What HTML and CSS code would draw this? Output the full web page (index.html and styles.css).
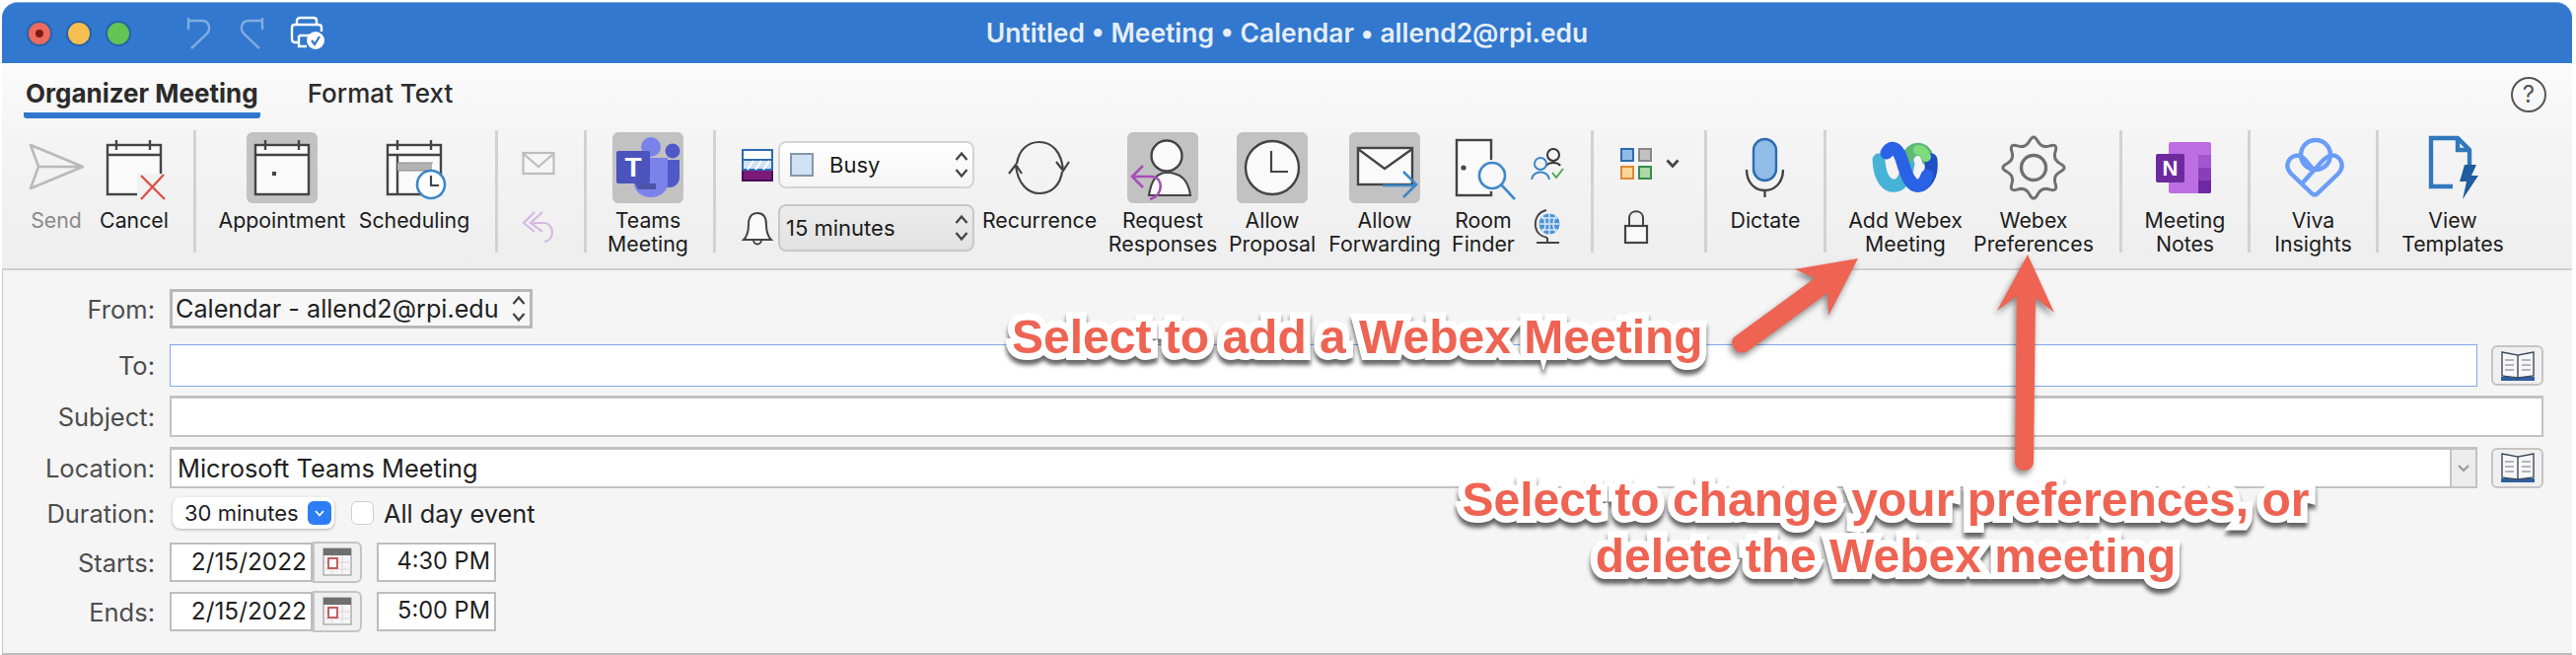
FILE: index.html
```html
<!DOCTYPE html>
<html lang="en">
<head>
<meta charset="utf-8">
<title>Untitled • Meeting • Calendar</title>
<link rel="stylesheet" href="styles.css">
</head>
<body>
<div class="window">
  <header class="titlebar">
    <div class="tb-left">
      <span class="light red"><i></i></span><span class="light yellow"></span><span class="light green"></span>
      <svg class="tb-undo" width="30" height="34" viewBox="0 0 30 34"><path d="M6 32 L22 17 C26 12 24 4 17 4 L3 4 M3 1 V13" fill="none" stroke="#82abe0" stroke-width="2.4"/></svg>
      <svg class="tb-redo" width="30" height="34" viewBox="0 0 30 34"><path d="M24 32 L8 17 C4 12 6 4 13 4 L27 4 M27 1 V13" fill="none" stroke="#82abe0" stroke-width="2.4"/></svg>
      <svg class="tb-print" width="36" height="36" viewBox="0 0 36 36"><path d="M7 9 V5 C7 3 9 2 10 2 H24 C26 2 27 3 27 5 V9 M10 27 H5 C3 27 2 25 2 23 V12 C2 10 3 9 5 9 H29 C31 9 32 10 32 12 V16 M9 20 H22 M9 20 V31 H17" fill="none" stroke="#fff" stroke-width="2.4"/><circle cx="26" cy="25" r="9" fill="#fff"/><path d="M22 25 L25 29 L30 21" fill="none" stroke="#3178ce" stroke-width="2.2"/></svg>
    </div>
    <div class="tb-title">Untitled • Meeting • Calendar • allend2@rpi.edu</div>
    <div class="tb-right"></div>
  </header>

  <nav class="tabs">
    <span class="tab active">Organizer Meeting</span>
    <span class="tab">Format Text</span>
    <span class="help">?</span>
  </nav>

  <section class="ribbon">
    <div class="item w-send disabled">
      <svg class="ico" viewBox="0 0 72 72"><path d="M10 13 L63 35 L10 57 L18 35 Z M18 35 H63" fill="none" stroke="#b9b9b9" stroke-width="2.6" stroke-linejoin="round"/></svg>
      <span class="lbl">Send</span>
    </div>
    <div class="item w-cancel">
      <svg class="ico" viewBox="0 0 72 72"><rect x="9" y="13" width="54" height="50" fill="#fafafa" stroke="#444" stroke-width="2.4"/><path d="M9 23 H63 M18 8 V18 M52 8 V18" stroke="#444" stroke-width="2.4"/><path d="M39 42 H70 V70 H39Z" fill="#f2f2f2"/><path d="M43 44 L67 68 M66 43 L43 68" stroke="#d9534a" stroke-width="2.4"/></svg>
      <span class="lbl">Cancel</span>
    </div>
    <div class="sep m-a"></div>

    <div class="item w-appt">
      <svg class="ico on" viewBox="0 0 72 72"><rect x="9" y="13" width="54" height="50" fill="#fafafa" stroke="#444" stroke-width="2.4"/><path d="M9 23 H63 M19 8 V18 M53 8 V18" stroke="#444" stroke-width="2.4"/><rect x="26" y="40" width="4" height="4" fill="#444"/></svg>
      <span class="lbl">Appointment</span>
    </div>
    <div class="item w-sched">
      <svg class="ico" viewBox="0 0 72 72"><rect x="9" y="13" width="54" height="50" fill="#fafafa" stroke="#444" stroke-width="2.4"/><path d="M9 23 H63 M19 8 V18 M53 8 V18 M19 23 V63" stroke="#444" stroke-width="2.4"/><rect x="19" y="31" width="35" height="8" fill="#b3b3b3"/><path d="M19 31 H55 M19 39 H55" stroke="#8a8a8a" stroke-width="1.2"/><circle cx="53" cy="53" r="14" fill="#fff" stroke="#3d87c9" stroke-width="2.6"/><path d="M53 44 V54 H61" fill="none" stroke="#444" stroke-width="2.2"/></svg>
      <span class="lbl">Scheduling</span>
    </div>
    <div class="sep m-b"></div>

    <div class="stack w-mail">
      <svg class="mini" viewBox="0 0 36 36"><rect x="2.5" y="7" width="31" height="21" fill="#f6f6f6" stroke="#bdbdbd" stroke-width="2.2"/><path d="M3 8 L18 21 L33 8" fill="none" stroke="#bdbdbd" stroke-width="2.2"/></svg>
      <svg class="mini" viewBox="0 0 36 36"><path d="M14 3 L3 14 L14 23 M22 3 L10 14 L22 23 M10 14 H24 C34 15 35 31 24 33" fill="none" stroke="#d6b9e2" stroke-width="2.2"/></svg>
    </div>
    <div class="sep m-c"></div>

    <div class="item w-teams">
      <svg class="ico on" viewBox="0 0 72 72"><circle cx="61" cy="19" r="7.5" fill="#5059c9"/><path d="M50 28 H68 V46 C68 52 63 56 58 56 H50Z" fill="#5059c9"/><circle cx="39" cy="15" r="10" fill="#7b83eb"/><path d="M22 26 H56 V52 C56 60 48 66 39 66 C30 66 22 60 22 52Z" fill="#7b83eb"/><path d="M23 52 H44 V58 H26Z" fill="#4d53a8"/><rect x="4" y="19" width="34" height="33" rx="2" fill="#4b53bc"/><text x="21" y="45" class="logo-t">T</text></svg>
      <span class="lbl">Teams<br>Meeting</span>
    </div>
    <div class="sep m-d"></div>

    <div class="status">
      <div class="status-row">
        <svg class="mini" viewBox="0 0 36 36"><rect x="3" y="3" width="30" height="31" fill="#7b1a7a" stroke="#4a0f55" stroke-width="2"/><rect x="3" y="3" width="30" height="10" fill="#fff" stroke="#2c6bb0" stroke-width="2"/><rect x="3" y="13" width="30" height="10" fill="#cfe2f6" stroke="#2c6bb0" stroke-width="2"/><path d="M8 23 L14 14 M16 23 L22 14 M24 23 L30 14" stroke="#fff" stroke-width="2"/></svg>
        <div class="drop light-drop"><span class="swatch"></span><span class="drop-text busy">Busy</span><svg class="updown" viewBox="0 0 14 28"><path d="M1.500 9 L7 2.500 L12.500 9 M1.500 19 L7 25.500 L12.500 19" fill="none" stroke="#444" stroke-width="2.300"/></svg></div>
      </div>
      <div class="status-row">
        <svg class="mini" viewBox="0 0 36 36"><path d="M18 3 C11 3 9 9 9 15 C9 23 7 27 4 30 H32 C29 27 27 23 27 15 C27 9 25 3 18 3Z M14 30 C14 36 22 36 22 30" fill="#fafafa" stroke="#444" stroke-width="2"/></svg>
        <div class="drop grey-drop"><span class="drop-text">15 minutes</span><svg class="updown" viewBox="0 0 14 28"><path d="M1.500 9 L7 2.500 L12.500 9 M1.500 19 L7 25.500 L12.500 19" fill="none" stroke="#444" stroke-width="2.300"/></svg></div>
      </div>
    </div>

    <div class="item w-recur">
      <svg class="ico" viewBox="0 0 72 72"><path d="M13 32 C15 18 24 10 36 10 C49 10 58 20 60 38 M53 30 L60 39 L66 30 M59 40 C57 54 48 62 36 62 C24 62 14 52 12 34 M5 42 L12 33 L18 42" fill="none" stroke="#444" stroke-width="2.2"/></svg>
      <span class="lbl">Recurrence</span>
    </div>
    <div class="item w-req">
      <svg class="ico on" viewBox="0 0 72 72"><path d="M22 64 C24 50 30 41 40 41 C54 41 62 48 64 64Z" fill="#fafafa" stroke="#444" stroke-width="2.2"/><ellipse cx="40" cy="24" rx="15.500" ry="15.500" fill="#fafafa" stroke="#444" stroke-width="2.4"/><path d="M16 34 L5 45 L16 56 M5 45 H25 C36 45 38 64 23 68" fill="none" stroke="#a64fb8" stroke-width="2.6"/></svg>
      <span class="lbl">Request<br>Responses</span>
    </div>
    <div class="item w-prop">
      <svg class="ico on" viewBox="0 0 72 72"><circle cx="36" cy="36" r="27" fill="#fafafa" stroke="#444" stroke-width="2.4"/><path d="M35 19 V40 H52" fill="none" stroke="#444" stroke-width="2.2"/></svg>
      <span class="lbl">Allow<br>Proposal</span>
    </div>
    <div class="item w-forw">
      <svg class="ico on" viewBox="0 0 72 72"><rect x="9" y="16" width="55" height="37" fill="#fafafa" stroke="#444" stroke-width="2.4"/><path d="M9 17 L36 37 L64 17" fill="none" stroke="#444" stroke-width="2.4"/><path d="M34 54 H68 M55 40 L68 53 L55 66" fill="none" stroke="#3d87c9" stroke-width="2.6"/></svg>
      <span class="lbl">Allow<br>Forwarding</span>
    </div>
    <div class="item w-room">
      <svg class="ico" viewBox="0 0 72 72"><rect x="9" y="8" width="35" height="56" fill="#fafafa" stroke="#444" stroke-width="2.4"/><circle cx="16" cy="36" r="2.600" fill="#444"/><circle cx="45" cy="44" r="16" fill="#f3f3f3"/><circle cx="45" cy="44" r="13" fill="#f8f8f8" stroke="#3d87c9" stroke-width="2.600"/><path d="M54 53 L68 68" stroke="#3d87c9" stroke-width="2.600"/></svg>
      <span class="lbl">Room<br>Finder</span>
    </div>
    <div class="stack w-small">
      <svg class="mini" viewBox="0 0 36 36"><circle cx="24" cy="9" r="6" fill="none" stroke="#333" stroke-width="2"/><path d="M17 20 C19 16 29 16 31 20" fill="none" stroke="#333" stroke-width="2"/><circle cx="11" cy="18" r="6" fill="#f3f3f3" stroke="#3d87c9" stroke-width="2"/><path d="M2 34 C3 24 19 24 20 34" fill="none" stroke="#3d87c9" stroke-width="2"/><path d="M23 27 L27 32 L34 23" fill="none" stroke="#4aa84f" stroke-width="2"/></svg>
      <svg class="mini" viewBox="0 0 36 36"><circle cx="20" cy="15" r="10.500" fill="#4d94d6"/><path d="M10 15 H30 M20 4 V26 M13 7 C17 12 17 19 13 23 M27 7 C23 12 23 19 27 23 M12 9 H28 M12 21 H28" fill="none" stroke="#d7e8f7" stroke-width="1.400"/><path d="M17 1 C8 3 5 11 6 18 C7 24 12 28 18 29 M18 29 V34 M7 34 H30" fill="none" stroke="#444" stroke-width="2"/></svg>
    </div>
    <div class="sep m-e"></div>

    <div class="stack w-cat">
      <div class="cat-row">
        <span class="cats"><i class="c1"></i><i class="c2"></i><i class="c3"></i><i class="c4"></i></span>
        <svg class="chev" width="14" height="10" viewBox="0 0 14 10"><path d="M1.500 1.500 L7 7.500 L12.500 1.500" fill="none" stroke="#444" stroke-width="2.800"/></svg>
      </div>
      <svg class="mini lock" viewBox="0 0 36 36"><path d="M11 17 V9 C11 0 25 0 25 9 V17" fill="none" stroke="#444" stroke-width="2"/><rect x="7" y="17" width="22" height="17" fill="#fafafa" stroke="#444" stroke-width="2.200"/></svg>
    </div>
    <div class="sep"></div>

    <div class="item w-dict">
      <svg class="ico" viewBox="0 0 72 72"><rect x="24" y="7" width="23" height="42" rx="11.500" fill="#90bce8" stroke="#2b6cb0" stroke-width="2.400"/><path d="M17 38 C17 66 54 66 54 38 M35.500 58 V66" fill="none" stroke="#444" stroke-width="2.400"/></svg>
      <span class="lbl">Dictate</span>
    </div>
    <div class="sep"></div>

    <div class="item w-addwx">
      <svg class="ico" viewBox="0 0 72 72"><path d="M9 28 C10 48 18 56 27 54 C35 52 37 42 39 32" fill="none" stroke="#45b2d6" stroke-width="13" stroke-linecap="round"/><path d="M59 28 C56 14 43 14 38 26" fill="none" stroke="#5fb87c" stroke-width="13" stroke-linecap="round"/><path d="M62 28 C64 44 56 56 47 54" fill="none" stroke="#1f4fc4" stroke-width="13" stroke-linecap="round"/><path d="M17 21 C24 10 30 20 33 30 C37 44 42 56 50 54 C54 53 56 50 58 44" fill="none" stroke="#2a62e6" stroke-width="13" stroke-linecap="round"/><path d="M57 25 C55 20 52 18 49 18" fill="none" stroke="#7fdc7c" stroke-width="10" stroke-linecap="round"/></svg>
      <span class="lbl">Add Webex<br>Meeting</span>
    </div>
    <div class="item w-prefs">
      <svg class="ico" viewBox="-36 -36 72 72"><path d="M27.200 -4.020 Q35 0 27.200 4.020 T22.080 16.400 T16.400 22.080 T4.020 27.200 T-4.020 27.200 T-16.400 22.080 T-22.080 16.400 T-27.200 4.020 T-27.200 -4.020 T-22.080 -16.400 T-16.400 -22.080 T-4.020 -27.200 T4.020 -27.200 T16.400 -22.080 T22.080 -16.400 T27.200 -4.020Z" fill="none" stroke="#707070" stroke-width="3"/><circle r="12.500" fill="none" stroke="#707070" stroke-width="3.400"/></svg>
      <span class="lbl">Webex<br>Preferences</span>
    </div>
    <div class="sep m-f"></div>

    <div class="item w-one">
      <svg class="ico" viewBox="0 0 72 72"><rect x="19" y="10" width="43" height="52" rx="2" fill="#bc6ee2"/><path d="M49 23 H62 V36 H49Z" fill="#a256cf"/><path d="M49 36 H62 V49 H49Z" fill="#8a3fb9"/><path d="M49 49 H62 V60 Q62 62 60 62 H49Z" fill="#6f28a3"/><rect x="6" y="22" width="29" height="29" rx="2" fill="#6c2a9e"/><text x="20.500" y="44" class="logo-n">N</text></svg>
      <span class="lbl">Meeting<br>Notes</span>
    </div>
    <div class="sep"></div>

    <div class="item w-viva">
      <svg class="ico" viewBox="0 0 72 72"><g fill="none" stroke="#6a9cf8" stroke-width="4.400" stroke-linejoin="round" stroke-linecap="round"><circle cx="38" cy="23" r="15"/><path d="M40 62 C38 64 36 64 34 62 L13 42 C5 33 12 22 22 24 C26 25 28 29 36 38"/><path d="M40 62 L61 42 C69 33 62 21 52 24 C49 25 47 27 44 30 L26 50"/></g></svg>
      <span class="lbl">Viva<br>Insights</span>
    </div>
    <div class="sep"></div>

    <div class="item w-tmpl">
      <svg class="ico" viewBox="0 0 72 72"><path d="M36 55 H14 V6 H41 L53 18 V33 M41 6 V18 H53" fill="none" stroke="#3077bd" stroke-width="4.400"/><path d="M48 33 H60 L55 44 H62 L46 68 L50 50 H43Z" fill="#205c9e"/></svg>
      <span class="lbl">View<br>Templates</span>
    </div>
  </section>

  <main class="form">
    <div class="row r-from">
      <label class="flabel">From:</label>
      <div class="from-sel"><span>Calendar - allend2@rpi.edu</span><svg class="updown" viewBox="0 0 14 28"><path d="M1.500 9 L7 2.500 L12.500 9 M1.500 19 L7 25.500 L12.500 19" fill="none" stroke="#444" stroke-width="2.300"/></svg></div>
    </div>
    <div class="row r-to">
      <label class="flabel">To:</label>
      <div class="input focus"></div>
      <div class="addr"><svg width="36" height="32" viewBox="0 0 36 32"><path d="M1 27 H35 V31 H1Z" fill="#2f5f9e"/><path d="M2 2 L18 5 V28 L2 26Z M34 2 L18 5 V28 L34 26Z" fill="#f7f7f7" stroke="#3a4a5c" stroke-width="1.400"/><path d="M5 10 H14 M5 15 H14 M5 20 H14 M22 10 H31 M22 15 H31 M22 20 H31" stroke="#b5b5b5" stroke-width="1.800"/></svg></div>
    </div>
    <div class="row r-subj">
      <label class="flabel">Subject:</label>
      <div class="input"></div>
    </div>
    <div class="row r-loc">
      <label class="flabel">Location:</label>
      <div class="input loc"><span class="loc-text">Microsoft Teams Meeting</span><span class="loc-drop"><svg width="12" height="8" viewBox="0 0 12 8"><path d="M1 1 L6 6 L11 1" fill="none" stroke="#999" stroke-width="2"/></svg></span></div>
      <div class="addr"><svg width="36" height="32" viewBox="0 0 36 32"><path d="M1 27 H35 V31 H1Z" fill="#2f5f9e"/><path d="M2 2 L18 5 V28 L2 26Z M34 2 L18 5 V28 L34 26Z" fill="#f7f7f7" stroke="#3a4a5c" stroke-width="1.400"/><path d="M5 10 H14 M5 15 H14 M5 20 H14 M22 10 H31 M22 15 H31 M22 20 H31" stroke="#b5b5b5" stroke-width="1.800"/></svg></div>
    </div>
    <div class="row r-dur">
      <label class="flabel">Duration:</label>
      <div class="popup"><span>30 minutes</span><span class="popup-btn"><svg width="10" height="7" viewBox="0 0 10 7"><path d="M1 1 L5 5.500 L9 1" fill="none" stroke="#fff" stroke-width="1.800"/></svg></span></div>
      <span class="check"></span>
      <span class="allday">All day event</span>
    </div>
    <div class="row r-start">
      <label class="flabel">Starts:</label>
      <div class="date">2/15/2022</div>
      <div class="calbtn"><svg width="30" height="30" viewBox="0 0 30 30"><rect x="1" y="1" width="28" height="27" fill="#f5f5f5" stroke="#8c8c8c"/><rect x="1" y="1" width="28" height="7" fill="#6f6f6f"/><path d="M1 15 H29 M1 22 H29 M10 8 V28 M20 8 V28" stroke="#d8d8d8"/><rect x="6" y="11" width="9" height="10" fill="#fff" stroke="#c0504d" stroke-width="1.800"/></svg></div>
      <div class="time">4:30 PM</div>
    </div>
    <div class="row r-end">
      <label class="flabel">Ends:</label>
      <div class="date">2/15/2022</div>
      <div class="calbtn"><svg width="30" height="30" viewBox="0 0 30 30"><rect x="1" y="1" width="28" height="27" fill="#f5f5f5" stroke="#8c8c8c"/><rect x="1" y="1" width="28" height="7" fill="#6f6f6f"/><path d="M1 15 H29 M1 22 H29 M10 8 V28 M20 8 V28" stroke="#d8d8d8"/><rect x="6" y="11" width="9" height="10" fill="#fff" stroke="#c0504d" stroke-width="1.800"/></svg></div>
      <div class="time">5:00 PM</div>
    </div>
  </main>
</div>

<svg class="arrows" width="2612" height="664" viewBox="0 0 2612 664">
  <path d="M1884 262 L1820 273 L1840 282 L1758 342 C1752 350 1762 362 1772 356 L1853 297 L1854 320Z" fill="#ee6352"/>
  <path d="M2056 258 L2025 315 L2045 300 L2043 468 C2043 480 2062 480 2062 468 L2064 302 L2083 317Z" fill="#ee6352"/>
</svg>
<div class="note note-a">Select to add a Webex Meeting</div>
<div class="note note-b">Select to change your preferences, or<br>delete the Webex meeting</div>
</body>
</html>
```
FILE: styles.css
```css
* { box-sizing: border-box; }
html, body { margin: 0; padding: 0; }
body {
  position: relative;
  width: 2612px;
  height: 664px;
  overflow: hidden;
  background: #fff;
  font-family: Inter, "Liberation Sans", sans-serif;
  color: #222;
}
.window {
  margin: 0 4px 0 2px;
  height: 664px;
  display: flex;
  flex-direction: column;
  padding-top: 2px;
}

/* title bar */
.titlebar {
  height: 62px;
  flex: none;
  background: #3178ce;
  border-top: 1px solid #7fa9de;
  border-radius: 16px 16px 0 0;
  display: grid;
  grid-template-columns: 1fr auto 1fr;
  align-items: center;
}
.tb-left { display: flex; align-items: center; padding-left: 25px; }
.light {
  width: 26px; height: 26px; border-radius: 50%;
  margin-right: 14px;
  border: 2px solid #2a62a8;
  display: flex; align-items: center; justify-content: center;
}
.light.red { background: #ee6a5f; }
.light.red i { width: 8px; height: 8px; border-radius: 50%; background: #7d1a12; }
.light.yellow { background: #f5be4f; }
.light.green { background: #62c554; }
.tb-undo { margin-left: 41px; }
.tb-redo { margin-left: 21px; }
.tb-print { margin-left: 25px; }
.tb-title {
  font-size: 26.4px;
  font-weight: 600;
  color: #e6eef9;
  padding-bottom: 2px;
}

/* tabs */
.tabs {
  height: 68px;
  flex: none;
  display: flex;
  align-items: flex-start;
  padding: 13px 26px 0 22px;
  background: linear-gradient(#fbfbfb, #f5f5f5);
}
.tab {
  font-size: 26px;
  line-height: 36px;
  height: 43px;
  padding: 0 2px;
  margin-right: 46px;
  color: #2b2b2b;
  font-weight: 500;
}
.tab.active {
  font-weight: 700;
  border-bottom: 6px solid #2f77cf;
  border-radius: 0 0 3px 3px;
}
.help {
  margin-left: auto;
  margin-top: 1px;
  width: 36px; height: 36px;
  border: 2px solid #555;
  border-radius: 50%;
  font-size: 24px;
  line-height: 32px;
  text-align: center;
  color: #555;
}

/* ribbon */
.ribbon {
  height: 142px;
  flex: none;
  display: flex;
  align-items: flex-start;
  padding: 2px 0 0 22px;
  background: linear-gradient(#f5f5f5, #eeeeee);
  border-bottom: 2px solid #cfcfcf;
}
.item {
  display: flex;
  flex-direction: column;
  align-items: center;
  flex: none;
}
.ico { width: 72px; height: 72px; flex: none; display: block; border-radius: 6px; }
.ico.on { background: #c2c2c2; }
.lbl {
  margin-top: 5px;
  font-size: 21.3px;
  line-height: 24px;
  text-align: center;
  white-space: nowrap;
  color: #1c1c1c;
}
.disabled .lbl { color: #8a8a8a; }
.sep { flex: none; width: 3px; height: 124px; margin-top: -2px; background: #d2d2d2; }
.m-a { margin-left: 14px; margin-right: 14px; }
.m-b { margin-left: 21px; }
.m-c { margin-left: 16px; margin-right: 12px; }
.m-d { margin-left: 16px; }
.m-f { margin-left: 19px; }
.w-send { width: 66px; }
.w-cancel { width: 92px; }
.w-appt { width: 146px; }
.w-sched { width: 122px; }
.w-mail { width: 60px; margin-left: 11px; }
.w-teams { width: 100px; }
.w-recur { width: 120px; margin-left: 6px; }
.w-req { width: 130px; }
.w-prop { width: 92px; }
.w-forw { width: 136px; }
.w-room { width: 64px; }
.w-small { width: 66px; margin-right: 11px; }
.w-dict { width: 118px; }
.w-addwx { width: 124px; margin-left: 18px; }
.w-prefs { width: 136px; }
.w-one { width: 127px; }
.w-viva { width: 127px; }
.w-tmpl { width: 150px; }

.stack {
  flex: none;
  display: flex;
  flex-direction: column;
  align-items: center;
  gap: 28px;
  padding-top: 14px;
}
.stack.w-cat { width: 112px; padding-left: 27px; align-items: flex-start; }
.mini { width: 36px; height: 36px; flex: none; display: block; }
.status {
  flex: none;
  width: 238px;
  margin-left: 24px;
  padding-top: 9px;
  display: flex;
  flex-direction: column;
  gap: 16px;
}
.status-row { display: flex; align-items: center; gap: 2px; height: 48px; }
.drop {
  width: 199px; height: 48px;
  margin-left: 1px;
  border: 2px solid #d4d4d4;
  border-radius: 8px;
  display: flex;
  align-items: center;
  font-size: 22px;
  color: #1c1c1c;
}
.light-drop { background: linear-gradient(#fff, #f5f5f5); }
.grey-drop { background: linear-gradient(#ececec, #e2e2e2); border-color: #c8c8c8; }
.swatch { width: 24px; height: 24px; margin-left: 10px; background: #cfe2f3; border: 2px solid #8596a8; flex: none; }
.drop-text { margin-left: 6px; }
.busy { margin-left: 16px; }
.updown { margin-left: auto; margin-right: 4px; width: 14px; height: 28px; flex: none; }
.cat-row { display: flex; align-items: center; gap: 14px; height: 36px; }
.cats { display: grid; grid-template-columns: 14px 14px; gap: 4px; }
.cats i { display: block; width: 14px; height: 14px; border: 2px solid; }
.cats .c1 { background: #8fbce8; border-color: #2b6cb0; }
.cats .c2 { background: #c2c2c2; border-color: #888; }
.cats .c3 { background: #f8d898; border-color: #e08a30; }
.cats .c4 { background: #abd9a8; border-color: #3c8a4a; }
.lock { margin-left: -2px; }
.logo-t { font: 700 28px "Liberation Sans", sans-serif; fill: #fff; text-anchor: middle; }
.logo-n { font: 700 22px "Liberation Sans", sans-serif; fill: #fff; text-anchor: middle; }

/* form */
.form {
  flex: 1;
  background: #f5f5f5;
  border-left: 1px solid #c4c4c4;
  border-bottom: 2px solid #bdbdbd;
  padding-top: 19px;
}
.row { display: flex; align-items: center; }
.flabel {
  width: 154px;
  margin-right: 15px;
  flex: none;
  text-align: right;
  font-size: 25.5px;
  color: #4d4d4d;
}
.r-from { height: 40px; }
.r-to { height: 43px; margin-top: 16px; }
.r-subj { height: 42px; margin-top: 9px; }
.r-loc { height: 42px; margin-top: 10px; }
.r-dur { height: 32px; margin-top: 9px; }
.r-start { height: 42px; margin-top: 13px; }
.r-end { height: 42px; margin-top: 8px; }
.from-sel {
  width: 368px; height: 40px;
  border: 3px solid #b8b8b8;
  background: #f7f7f7;
  display: flex; align-items: center;
  padding-left: 3px;
  font-size: 25.2px;
  color: #1f1f1f;
}
.input {
  flex: 1;
  height: 100%;
  background: #fff;
  border: 2px solid #c2c2c2;
  border-top-width: 3px;
  display: flex; align-items: center;
}
.r-subj .input { margin-right: 29px; }
.input.focus { border: 1.5px solid #82a9e8; }
.addr {
  width: 53px; height: 41px;
  margin: 0 29px 0 14px;
  flex: none;
  border: 2px solid #c4c4c4;
  border-radius: 6px;
  background: #f0f0f0;
  display: flex; align-items: center; justify-content: center;
}
.loc { padding-left: 6px; font-size: 25.4px; color: #1f1f1f; }
.loc-text { flex: 1; }
.loc-drop {
  width: 26px; height: 100%;
  background: #ececec;
  border-left: 2px solid #c2c2c2;
  display: flex; align-items: center; justify-content: center;
  flex: none;
}
.popup {
  margin-left: 3px;
  width: 164px; height: 32px;
  background: #fff;
  border-radius: 8px;
  box-shadow: 0 1px 3px rgba(0,0,0,.3);
  display: flex; align-items: center;
  padding-left: 12px;
  font-size: 22px;
  color: #1f1f1f;
  justify-content: space-between;
}
.popup-btn {
  width: 24px; height: 24px; margin-right: 3px;
  background: #2d7df5;
  border-radius: 6px;
  display: flex; align-items: center; justify-content: center;
}
.check {
  width: 23px; height: 24px;
  margin-left: 17px;
  background: #fff;
  border: 1.500px solid #cfcfcf;
  border-radius: 6px;
}
.allday { margin-left: 10px; font-size: 25.3px; color: #222; }
.date {
  width: 145px; height: 40px;
  background: #fff;
  border: 2px solid #bdbdbd;
  text-align: right;
  padding-right: 4px;
  font-size: 24.4px;
  line-height: 34px;
  color: #1f1f1f;
}
.calbtn {
  width: 50px; height: 42px;
  background: #f0f0f0;
  border: 2px solid #c4c4c4;
  border-radius: 0 6px 6px 0;
  display: flex; align-items: center; justify-content: center;
}
.time {
  width: 121px; height: 40px;
  margin-left: 15px;
  background: #fff;
  border: 2px solid #bdbdbd;
  text-align: right;
  padding-right: 4px;
  font-size: 23.6px;
  line-height: 34px;
  color: #1f1f1f;
}

/* annotations lying over the window */
.arrows {
  position: absolute;
  left: 0; top: 0;
  pointer-events: none;
  filter: drop-shadow(-2px 4px 3px rgba(0,0,0,.45));
}
.note {
  position: absolute;
  font-family: "Liberation Sans", Arial, sans-serif;
  font-weight: 700;
  font-size: 48px;
  line-height: 57px;
  white-space: nowrap;
  color: #ee6352;
  -webkit-text-stroke: 14px #fff;
  paint-order: stroke fill;
  filter: drop-shadow(0 5px 2px rgba(0,0,0,.6));
}
.note-a { left: 1026px; top: 313px; }
.note-b { left: 1412px; top: 478px; width: 1000px; text-align: center; }
```
